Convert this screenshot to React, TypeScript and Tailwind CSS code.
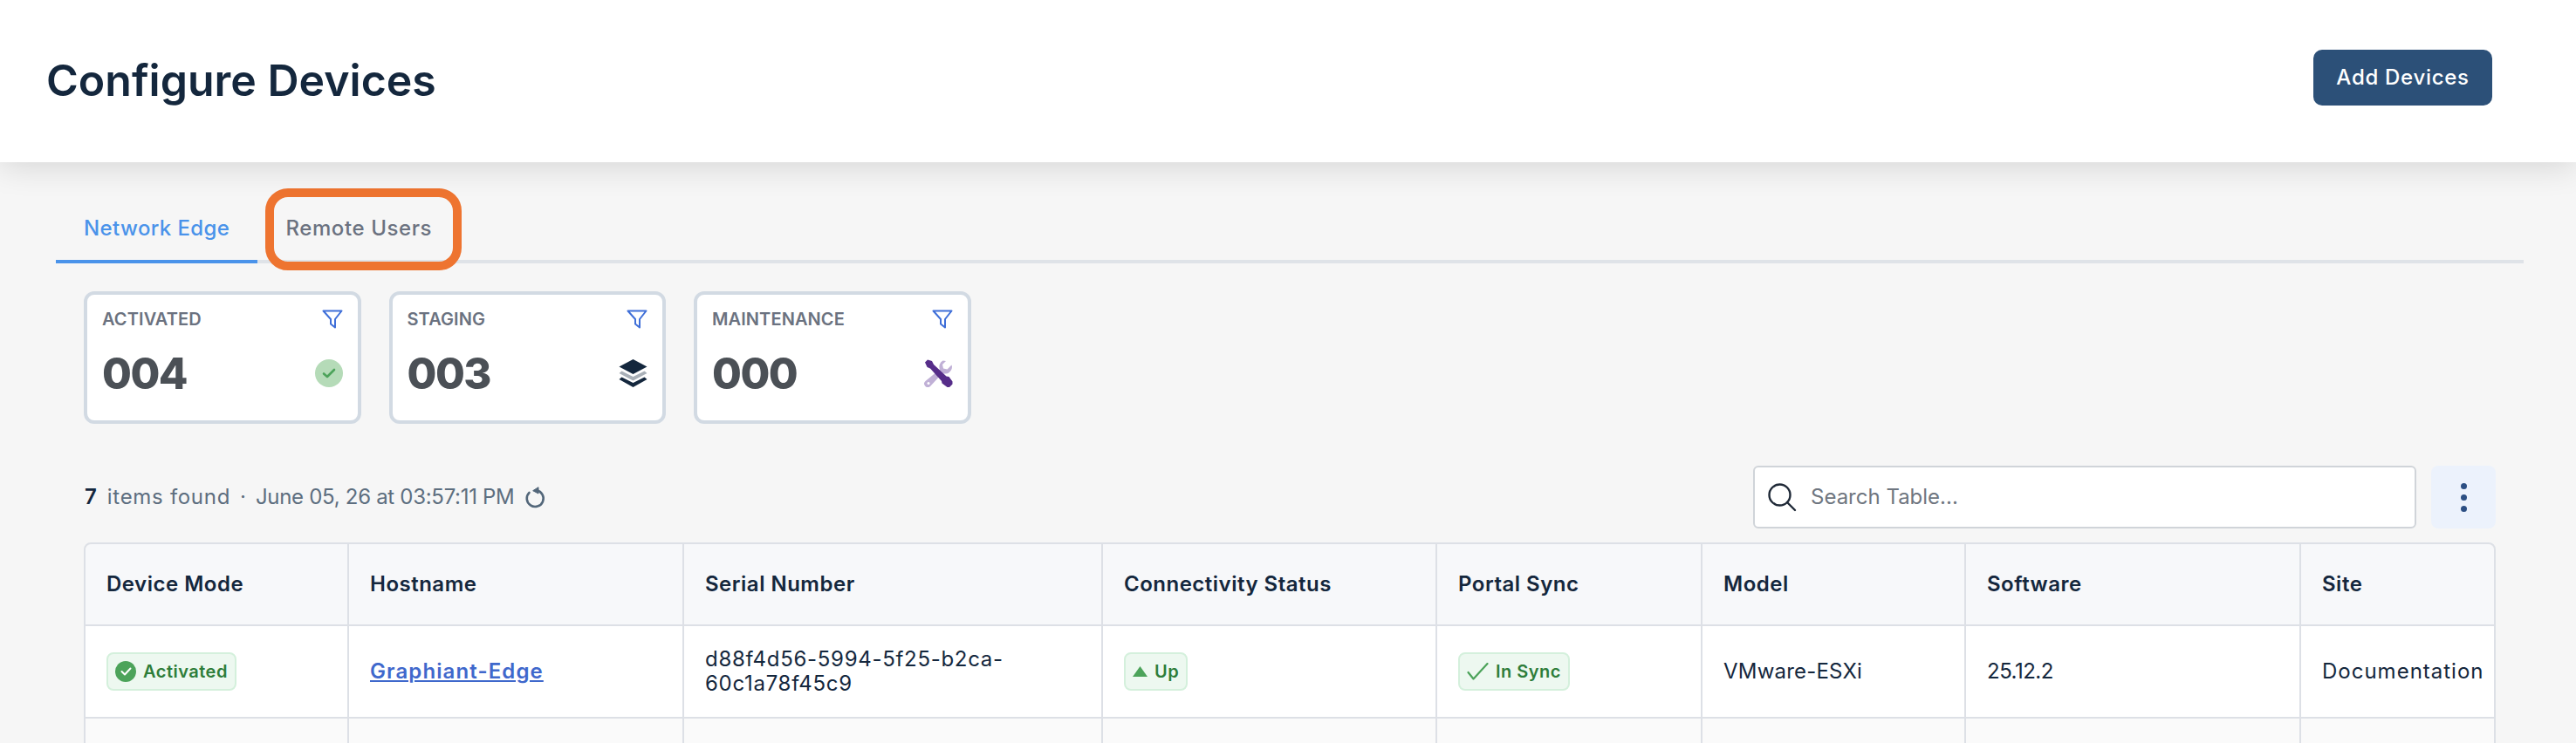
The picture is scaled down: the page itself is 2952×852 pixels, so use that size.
const font = "[font-family:Inter,'Liberation_Sans',sans-serif]";

function FunnelIcon() {
  return (
    <svg width="24" height="22" viewBox="0 0 24 22" fill="none" stroke="#3f6fd8" strokeWidth="2" strokeLinejoin="round">
      <path d="M1.5 1.5h21L15 11v9.5l-5-4V11z" />
    </svg>
  );
}

function CheckCircle() {
  return (
    <div className="w-8 h-8 rounded-full bg-[#b5dbb8] flex items-center justify-center">
      <svg width="16" height="12" viewBox="0 0 16 12" fill="none" stroke="#4ca35a" strokeWidth="2.6" strokeLinecap="round" strokeLinejoin="round">
        <path d="M2 6.5l4 3.5 8-8" />
      </svg>
    </div>
  );
}

function StackIcon() {
  return (
    <svg width="33" height="32" viewBox="0 0 33 32">
      <path d="M16.5 0L32.5 8.5 16.5 17 .5 8.5z" fill="#14273d" />
      <path d="M3.5 13.5L16.5 20 29.5 13.5 32.5 16 16.5 24.5 .5 16z" fill="#a9b0b8" />
      <path d="M3.5 20.5L16.5 27 29.5 20.5 32.5 23 16.5 32 .5 23z" fill="#14273d" />
    </svg>
  );
}

function ToolsIcon() {
  return (
    <svg width="33" height="32" viewBox="0 0 33 32">
      <path d="M21.5 1.5a8 8 0 0 0-3.5 10L1.5 25a4 4 0 0 0 5.5 6l14-15a8 8 0 0 0 11-7.5l-.5-2-5 5-4.5-1-1-4.5 4-4z" fill="#c0b0d6" />
      <circle cx="5" cy="27.5" r="1.5" fill="#ffffff" />
      <path d="M1 3.5L4 .5l5 1.5 2 4 14.500 13.500 3 .5 4 5.500v3l-3.500 3.500h-2.500l-6-4.500-.5-2.500L7 10.500 3.500 9z" fill="#562d89" />
    </svg>
  );
}

function RefreshIcon() {
  return (
    <svg width="22" height="24" viewBox="0 0 22 24" fill="none" className="overflow-visible">
      <path d="M4.500 6.800a9.500 9.500 0 1 0 8.500-2.600" stroke="#53677a" strokeWidth="2.600" strokeLinecap="round" />
      <path d="M15 .700V8L8.700 4.700z" fill="#53677a" stroke="#53677a" strokeWidth="1" strokeLinejoin="round" />
    </svg>
  );
}

function StatCard({ label, value, icon }: { label: string; value: string; icon: React.ReactNode }) {
  return (
    <div className="w-[317.5px] h-[152px] bg-white border-4 border-[#d2dae3] rounded-xl pl-[17px] pr-[17px] pt-[16px]">
      <div className="flex items-center justify-between h-[24px]">
        <span className="text-[20px] font-semibold text-[#6b7280] tracking-[0.1px] leading-none">{label}</span>
        <FunnelIcon />
      </div>
      <div className="flex items-center justify-between mt-[30px] h-[40px]">
        <span className="text-[49px] font-extrabold text-[#4b5056] leading-none tracking-[-1.5px]">{value}</span>
        {icon}
      </div>
    </div>
  );
}

const headers = ['Device Mode', 'Hostname', 'Serial Number', 'Connectivity Status', 'Portal Sync', 'Model', 'Software', 'Site'];

function Badge({ children }: { children: React.ReactNode }) {
  return (
    <span className="inline-flex items-center h-[44px] px-[8px] gap-[8px] bg-[#edf8f0] border-2 border-[#d4f0dc] rounded-lg text-[20px] font-semibold text-[#2e7d3a] tracking-[0.5px]">
      {children}
    </span>
  );
}

const cell = 'border-r-2 border-b-2 border-[#dde0e6] pl-[24px] flex items-center min-w-0 overflow-hidden';
const lastCell = 'border-b-2 border-[#dde0e6] pl-[24px] flex items-center min-w-0 overflow-hidden';

export default function App() {
  return (
    <div className={`h-[852px] w-[2952px] overflow-hidden bg-[#f6f6f6] ${font}`}>
      <header className="relative z-10 h-[186px] bg-white flex items-start justify-between pl-[53px] pr-[96px] pt-[57px] shadow-[0_4px_36px_rgba(0,0,0,0.14)]">
        <h1 className="text-[50px] leading-[70px] font-semibold text-[#14273d]">Configure Devices</h1>
        <button className="w-[205px] h-[64px] rounded-[10px] bg-[#2c5078] text-white text-[24px] font-medium tracking-[0.7px]">Add Devices</button>
      </header>

      <main className="pl-[64px] pr-[60px] pt-[36px]">
        <div className="relative flex h-[80px] border-b-4 border-[#dfe3e8]">
          <div className="h-[80px] border-b-4 border-[#4a93ea] px-[32px] leading-[80px] text-[24px] font-medium tracking-[0.4px] text-[#4a93ea] pb-[4px]">Network Edge</div>
          <div className="h-[80px] px-[32px] leading-[80px] text-[24px] font-medium tracking-[0.6px] text-[#6b7280]">Remote Users</div>
          <div className="absolute left-[240px] top-[-6px] w-[225px] h-[94px] border-[10px] border-[#ee7430] rounded-[26px]" />
        </div>

        <section className="px-[32px]">
          <div className="flex gap-[32px] mt-[32px]">
            <StatCard label="ACTIVATED" value="004" icon={<CheckCircle />} />
            <StatCard label="STAGING" value="003" icon={<StackIcon />} />
            <StatCard label="MAINTENANCE" value="000" icon={<ToolsIcon />} />
          </div>

          <div className="flex items-center justify-between mt-[48px] h-[72px]">
            <div className="flex items-center text-[24px] text-[#5d6e7f] pl-[1px]">
              <span className="font-semibold text-[#14273d]">7</span>
              <span className="ml-[12px] tracking-[0.7px]">items found</span>
              <span className="mx-[11px]">·</span>
              <span className="tracking-[-0.3px]">June 05, 26 at 03:57:11 PM</span>
              <span className="ml-[12px] flex"><RefreshIcon /></span>
            </div>
            <div className="flex gap-[17px]">
              <div className="w-[760px] h-[72px] bg-white border-2 border-[#d0d4d9] rounded-md flex items-center pl-[14px] gap-[16px]">
                <svg width="34" height="34" viewBox="0 0 34 34" fill="none" stroke="#1f2937" strokeWidth="2.400" strokeLinecap="round">
                  <circle cx="14.500" cy="14.500" r="12" />
                  <path d="M23 23l9 9" />
                </svg>
                <span className="text-[24px] text-[#6f7680]">Search Table...</span>
              </div>
              <div className="w-[74px] h-[72px] bg-[#ecf2fc] rounded-lg flex flex-col items-center justify-center gap-[6px]">
                <span className="w-[7px] h-[7px] rounded-full bg-[#2c4f83]" />
                <span className="w-[7px] h-[7px] rounded-full bg-[#2c4f83]" />
                <span className="w-[7px] h-[7px] rounded-full bg-[#2c4f83]" />
              </div>
            </div>
          </div>

          <div className="mt-[16px] border-2 border-[#dde0e6] rounded-t-lg grid grid-cols-[302px_384px_480px_383px_304px_302px_384px_1fr] grid-rows-[94px_106px_106px] text-[24px] text-[#14273d]">
            {headers.map((h, i) => (
              <div key={h} className={`${i === 7 ? lastCell : cell} bg-[#f7f8fa] font-semibold tracking-[0.5px] ${i === 0 ? 'rounded-tl-lg' : ''} ${i === 7 ? 'rounded-tr-lg' : ''}`}>
                {h}
              </div>
            ))}

            <div className={`${cell} bg-white`}>
              <Badge>
                <span className="w-[24px] h-[24px] rounded-full bg-[#4ca35a] flex items-center justify-center">
                  <svg width="13" height="10" viewBox="0 0 13 10" fill="none" stroke="#ffffff" strokeWidth="2" strokeLinecap="round" strokeLinejoin="round">
                    <path d="M1.500 5l3.500 3.500 6.500-7" />
                  </svg>
                </span>
                Activated
              </Badge>
            </div>
            <div className={`${cell} bg-white`}>
              <a href="#" className="text-[#3f68cc] font-semibold underline tracking-[1.1px]">Graphiant-Edge</a>
            </div>
            <div className={`${cell} bg-white leading-[28px] pr-[24px] tracking-[0.7px]`}>
              <span>d88f4d56-5994-5f25-b2ca-<br />60c1a78f45c9</span>
            </div>
            <div className={`${cell} bg-white`}>
              <Badge>
                <svg width="17" height="12" viewBox="0 0 17 12"><path d="M8.500 0L17 12H0z" fill="#4ca35a" /></svg>
                Up
              </Badge>
            </div>
            <div className={`${cell} bg-white`}>
              <Badge>
                <svg width="25" height="20" viewBox="0 0 25 20" fill="none" stroke="#4ca35a" strokeWidth="2.200" strokeLinecap="round" strokeLinejoin="round">
                  <path d="M1.500 11l6 7.500L23.500 1" />
                </svg>
                In Sync
              </Badge>
            </div>
            <div className={`${cell} bg-white tracking-[0.2px]`}>VMware-ESXi</div>
            <div className={`${cell} bg-white tracking-[-0.5px]`}>25.12.2</div>
            <div className={`${lastCell} bg-white tracking-[1px]`}>Documentation</div>

            {headers.map((h, i) => (
              <div key={h} className={`${i === 7 ? lastCell : cell} bg-[#fafafa]`} />
            ))}
          </div>
        </section>
      </main>
    </div>
  );
}
